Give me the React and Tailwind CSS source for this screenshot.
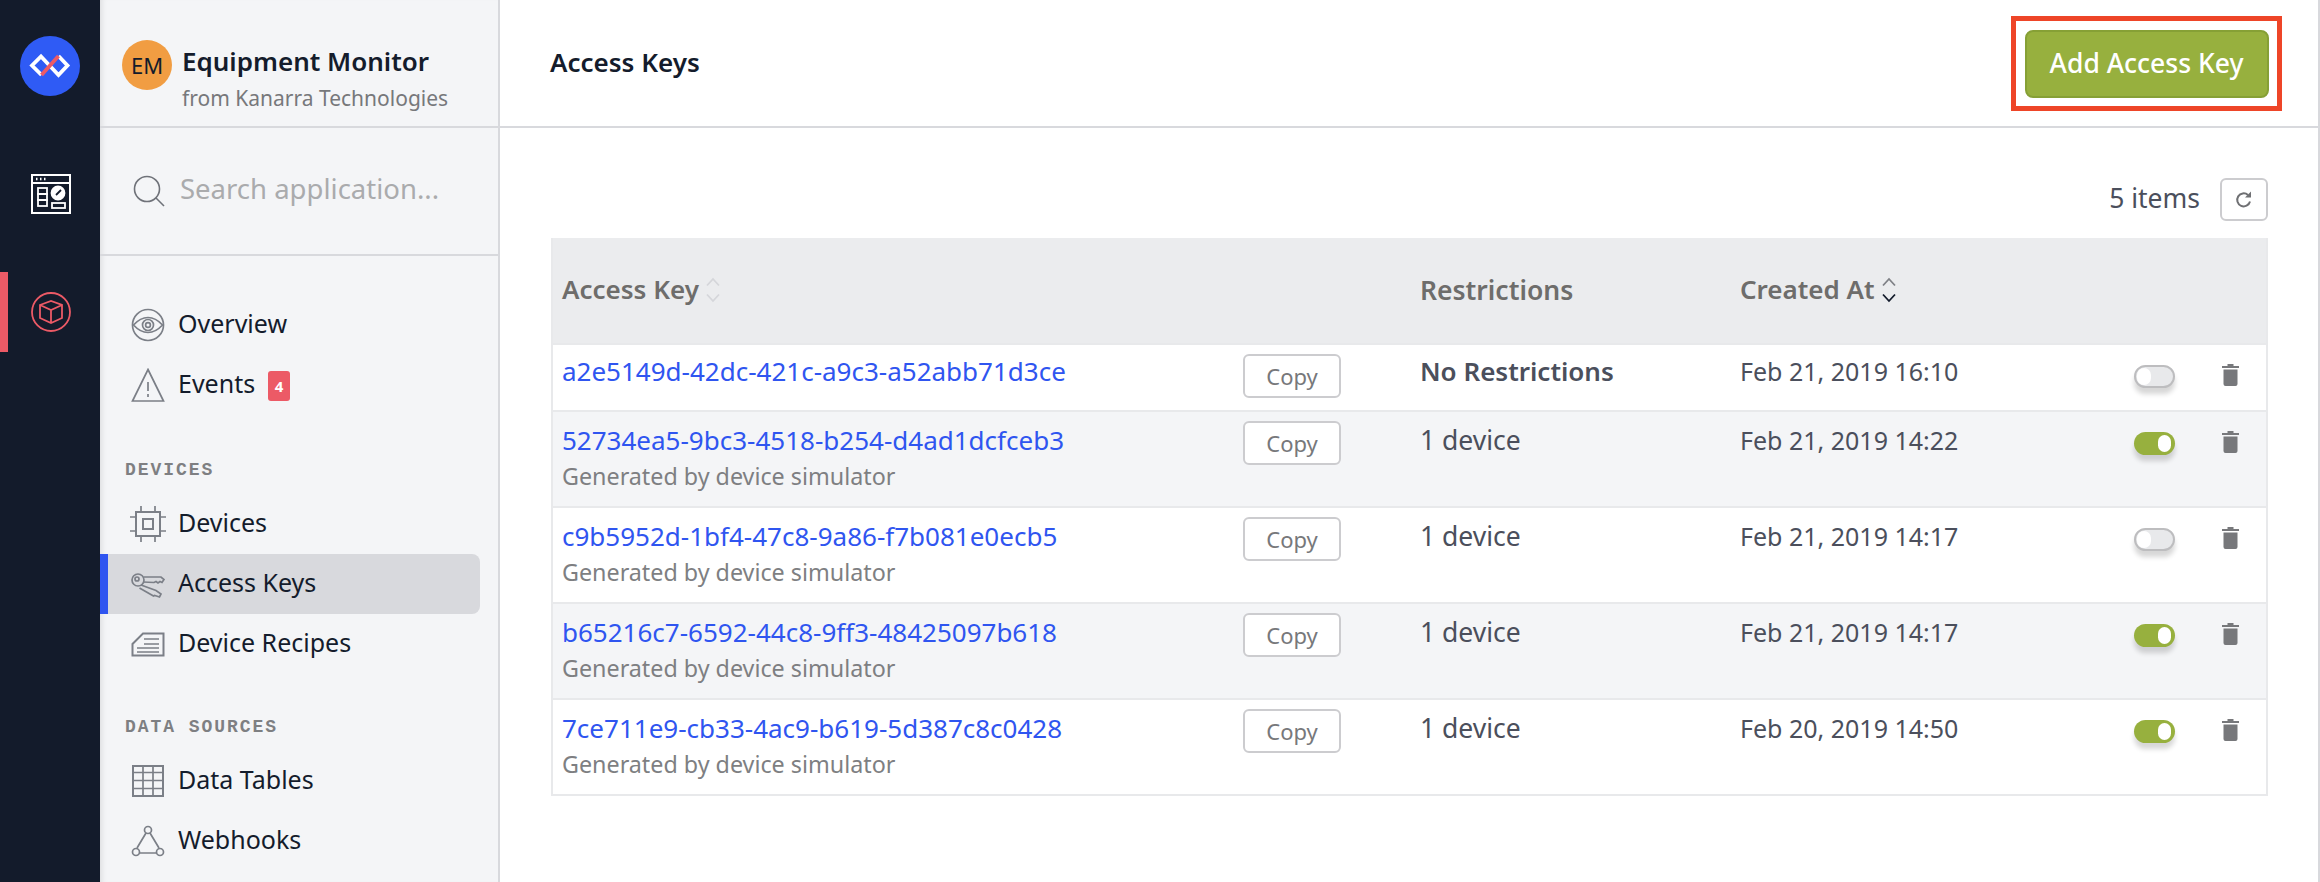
import React from "react";

const F = "font-['Noto_Sans',sans-serif]";

const Ic = ({ children, w = 34, h = 34 }) => (
  <svg width={w} height={h} viewBox={`0 0 ${w} ${h}`} fill="none" stroke="#7b7f87" strokeWidth="1.7" className="shrink-0">
    {children}
  </svg>
);

const Eye = () => (
  <Ic>
    <circle cx="17" cy="17" r="15.5" />
    <path d="M2.500 17C8 11 12 9.500 17 9.500S26 11 31.500 17C26 23 22 24.500 17 24.500S8 23 2.500 17Z" />
    <circle cx="17" cy="17" r="5.500" />
    <circle cx="17" cy="17" r="2.400" />
  </Ic>
);
const Warn = () => (
  <Ic h={34}>
    <path d="M17 1.500 32.500 33H1.500Z" />
    <path d="M17 14v9M17 26v3" />
  </Ic>
);
const Chip = () => (
  <Ic w={36} h={36}>
    <rect x="6" y="6" width="24" height="24" strokeWidth="2" />
    <rect x="13" y="13" width="10" height="10" strokeWidth="2" />
    <path d="M11 0v6M25 0v6M11 30v6M25 30v6M0 11h6M0 25h6M30 11h6M30 25h6" />
  </Ic>
);
const Keys = () => (
  <Ic>
    <circle cx="7" cy="13" r="6" />
    <circle cx="6" cy="12" r="2" />
    <path d="M12.500 10H30l3 2.500-2 3-2-1-2 1.500-2-1.500-2 1-11-.5" />
    <path d="M10 18l15 5.500 5 3.500-1.500 3-3-1-2-.5-1 .5-14-8" />
  </Ic>
);
const Recipe = () => (
  <Ic w={34} h={25}>
    <path d="M1.500 23.500V12L12 1.500h20.500v22Z" strokeWidth="2" />
    <path d="M13 7h15M13 12h15M6 16h22M6 20h22" />
  </Ic>
);
const TableI = () => (
  <Ic w={32} h={32}>
    <rect x="1" y="1" width="30" height="30" strokeWidth="2" />
    <path d="M1 7.500h30M1 15.500h30M1 23.500h30M11 1v30M21 1v30" />
  </Ic>
);
const Hook = () => (
  <Ic h={32}>
    <circle cx="17" cy="5" r="3.500" />
    <circle cx="5" cy="27" r="3.500" />
    <circle cx="29" cy="27" r="3.500" />
    <path d="M15 8 6 23M19 8l9 15M9 28h16" />
  </Ic>
);

const Item = ({ icon, label, active, badge }) => (
  <div className={`flex h-[60px] w-[380px] items-center rounded-r-lg border-l-[8px] pl-[24px] ${active ? "border-[#2f55f0] bg-[#d8d9dd]" : "border-transparent"}`}>
    <span className="flex w-[32px] justify-center">{icon}</span>
    <span className="-mt-[3px] ml-[14px] text-[25px] leading-none text-[#141c2c]">{label}</span>
    {badge && (
      <span className="ml-[13px] mt-[2px] flex h-[30px] w-[22px] items-center justify-center rounded-[3px] bg-[#ec5a66] text-[15px] font-bold text-white">
        {badge}
      </span>
    )}
  </div>
);

const Label = ({ children, className }) => (
  <div className={`pl-[25px] font-['Liberation_Mono',monospace] text-[18px] font-bold leading-none tracking-[1.95px] text-[#7e7f82] ${className}`}>
    {children}
  </div>
);

const Sort = ({ dark }) => (
  <svg width="16" height="26" viewBox="0 0 16 26" fill="none" strokeWidth="1.8" className="ml-[6px] mt-[2px] shrink-0">
    <path d="M2 8.500 8 2l6 6.500" stroke={dark ? "#7f8186" : "#d5d6da"} />
    <path d="M2 17.500 8 24l6-6.500" stroke={dark ? "#131b2b" : "#d5d6da"} />
  </svg>
);

const Toggle = ({ on }) => (
  <div className={`relative h-[23px] w-[41px] rounded-full shadow-[0_6px_5px_rgba(0,0,0,0.16)] ${on ? "bg-[#97b03e]" : "border-2 border-[#bdbdbf] bg-[#e8e9eb]"}`}>
    <div className={`absolute rounded-full bg-white ${on ? "right-[4px] top-[3px] h-[17px] w-[13px]" : "left-[1px] top-[1px] h-[17px] w-[14px]"}`} />
  </div>
);

const Trash = () => (
  <svg width="17" height="22" viewBox="0 0 17 22" fill="#77787b">
    <path d="M5.500 0h6v2h5.500v2H0V2h5.500ZM1.500 5.500h14V20a2 2 0 0 1-2 2h-10a2 2 0 0 1-2-2Z" />
  </svg>
);

const rows = [
  ["a2e5149d-42dc-421c-a9c3-a52abb71d3ce", "", "No Restrictions", "Feb 21, 2019 16:10", false],
  ["52734ea5-9bc3-4518-b254-d4ad1dcfceb3", "Generated by device simulator", "1 device", "Feb 21, 2019 14:22", true],
  ["c9b5952d-1bf4-47c8-9a86-f7b081e0ecb5", "Generated by device simulator", "1 device", "Feb 21, 2019 14:17", false],
  ["b65216c7-6592-44c8-9ff3-48425097b618", "Generated by device simulator", "1 device", "Feb 21, 2019 14:17", true],
  ["7ce711e9-cb33-4ac9-b619-5d387c8c0428", "Generated by device simulator", "1 device", "Feb 20, 2019 14:50", true],
];

const cols = "grid grid-cols-[690px_169px_320px_380px_107px_1fr]";

export default function App() {
  return (
    <div className={`flex h-[882px] w-[2320px] overflow-hidden bg-white ${F}`}>
      <aside className="flex w-[100px] shrink-0 flex-col bg-[#131b2b]">
        <div className="ml-[20px] mt-[36px] h-[60px] w-[60px] rounded-full bg-[#2f5bf5]">
          <svg width="60" height="60" viewBox="0 0 60 60" fill="none">
            <path d="M29.500 29.500 21 20.500l-9 9 9.500 9.500" stroke="white" strokeWidth="3.800" />
            <path d="M29.500 29.500 38.500 39l9-9.500-9-9.500" stroke="white" strokeWidth="3.800" />
            <path d="M21.500 39 38.500 20" stroke="#ec5a66" strokeWidth="3.800" />
          </svg>
        </div>
        <div className="ml-[31px] mt-[78px]">
          <svg width="40" height="40" viewBox="0 0 40 40" fill="none" stroke="white" strokeWidth="1.800">
            <rect x="1" y="1" width="38" height="38" strokeWidth="2" />
            <path d="M2 9h36" />
            <path d="M5 5h1.500M9 5h1.500M13 5h1.500" strokeWidth="2.500" />
            <rect x="7" y="14" width="9" height="6" />
            <rect x="7" y="20" width="9" height="6" />
            <rect x="7" y="26" width="9" height="6" />
            <rect x="21" y="29" width="13" height="5" />
            <circle cx="27" cy="19" r="6.500" fill="white" />
            <path d="m25 21 5-5" stroke="#131b2b" />
          </svg>
        </div>
        <div className="mt-[58px] flex h-[80px] items-center border-l-[8px] border-[#ec5a66] pl-[23px]">
          <svg width="40" height="40" viewBox="0 0 40 40" fill="none" stroke="#ec5a66" strokeWidth="1.800">
            <circle cx="20" cy="20" r="19" />
            <path d="M9 13 20 9l11 4v13l-11 5-11-5ZM9 13l11 5 11-5M20 18v13" />
          </svg>
        </div>
      </aside>

      <nav className="flex w-[400px] shrink-0 flex-col border-r-2 border-[#d8d9dd] bg-[#f4f5f7] shadow-[inset_6px_0_6px_-5px_rgba(0,0,0,0.12)]">
        <div className="flex h-[128px] shrink-0 items-start border-b-2 border-[#d8d9dd] pl-[22px] pt-[40px]">
          <div className="flex h-[50px] w-[50px] items-center justify-center rounded-full bg-[#f19d42] text-[22px] text-[#131b2b]">EM</div>
          <div className="ml-[10px] mt-[5px]">
            <div className="whitespace-nowrap text-[26px] font-semibold leading-[32px] text-[#141c2c]">Equipment Monitor</div>
            <div className="mt-[8px] whitespace-nowrap text-[21px] leading-[26px] text-[#77787b]">from Kanarra Technologies</div>
          </div>
        </div>
        <div className="flex h-[128px] shrink-0 items-center border-b-2 border-[#d8d9dd] pl-[33px]">
          <svg width="32" height="32" viewBox="0 0 32 32" fill="none" stroke="#6f7279" strokeWidth="1.600">
            <circle cx="14" cy="14" r="12.500" />
            <path d="m23 23 8 8" />
          </svg>
          <span className="-mt-[5px] ml-[15px] text-[27.500px] leading-none text-[#aaabad]">Search application...</span>
        </div>
        <div className="flex flex-col pt-[39px]">
          <Item icon={<Eye />} label="Overview" />
          <Item icon={<Warn />} label="Events" badge="4" />
          <Label className="mt-[46px]">DEVICES</Label>
          <div className="mt-[15px]">
            <Item icon={<Chip />} label="Devices" />
            <Item icon={<Keys />} label="Access Keys" active />
            <Item icon={<Recipe />} label="Device Recipes" />
          </div>
          <Label className="mt-[44px]">DATA SOURCES</Label>
          <div className="mt-[15px]">
            <Item icon={<TableI />} label="Data Tables" />
            <Item icon={<Hook />} label="Webhooks" />
          </div>
        </div>
      </nav>

      <main className="flex w-[1820px] shrink-0 flex-col border-r-2 border-[#d8d9dd]">
        <header className="flex h-[128px] shrink-0 items-start justify-between border-b-2 border-[#d8d9dd] pl-[50px] pr-[36px]">
          <h1 className="mt-[46px] text-[26px] font-semibold leading-[32px] text-[#141c2c]">Access Keys</h1>
          <div className="mt-[16px] flex h-[95px] w-[271px] items-center justify-center border-[5px] border-[#ee4528]">
            <button className="h-[68px] w-[244px] rounded-lg border-2 border-[#86a035] bg-[#97b03e] text-[26.500px] font-medium text-white">
              Add Access Key
            </button>
          </div>
        </header>

        <div className="flex h-[110px] shrink-0 items-start justify-end pr-[50px] pt-[50px]">
          <span className="mt-[2px] text-[26.500px] leading-[36px] text-[#4b4f5c]">5 items</span>
          <span className="ml-[20px] flex h-[43px] w-[48px] items-center justify-center rounded-md border-2 border-[#cccccf]">
            <svg width="18" height="18" viewBox="0 0 18 18" fill="none" stroke="#6f7073" strokeWidth="2">
              <path d="M15 10.500A6.500 6.500 0 1 1 13 4" />
              <path d="M10 6.500h6v-6" fill="#6f7073" stroke="none" />
            </svg>
          </span>
        </div>

        <section className="ml-[51px] mr-[50px] border-2 border-t-0 border-[#e8e9eb]">
          <div className={`${cols} h-[105px] bg-[#ebecee] text-[26px] font-semibold text-[#6e6d6b]`}>
            <div className="flex items-center pb-[3px] pl-[9px]">Access Key<Sort /></div>
            <div />
            <div className="flex items-center pl-[8px] text-[26.500px]">Restrictions</div>
            <div className="flex items-center pb-[3px] pl-[8px]">Created At<Sort dark /></div>
            <div />
            <div />
          </div>
          {rows.map((r, i) => (
            <div
              key={r[0]}
              className={`${cols} border-t-2 border-[#e8e9eb] ${i === 0 ? "h-[67px]" : "h-[96px]"} ${i % 2 === 1 ? "bg-[#f4f5f7]" : "bg-white"}`}
            >
              <div className={`pl-[9px] ${i === 0 ? "pt-[8px]" : "pt-[10px]"}`}>
                <div className="text-[26px] leading-[36px] text-[#2f55f0]">{r[0]}</div>
                {r[1] && <div className="mt-[3px] text-[23.300px] leading-[30px] text-[#7e7f82]">{r[1]}</div>}
              </div>
              <div className="pt-[9px]">
                <span className="flex h-[44px] w-[98px] items-center justify-center rounded-md border-2 border-[#cccccf] bg-white text-[22px] text-[#77787b]">Copy</span>
              </div>
              <div className={`pl-[8px] text-[26.500px] leading-[36px] text-[#4b4f5c] ${i === 0 ? "pt-[8px] text-[26px] font-semibold" : "pt-[10px]"}`}>{r[2]}</div>
              <div className={`pl-[8px] text-[25px] leading-[36px] text-[#4b4f5c] ${i === 0 ? "pt-[8px]" : "pt-[10px]"}`}>{r[3]}</div>
              <div className="pl-[22px] pt-[20px]"><Toggle on={r[4]} /></div>
              <div className="pl-[3px] pt-[19px]"><Trash /></div>
            </div>
          ))}
        </section>
      </main>
    </div>
  );
}
